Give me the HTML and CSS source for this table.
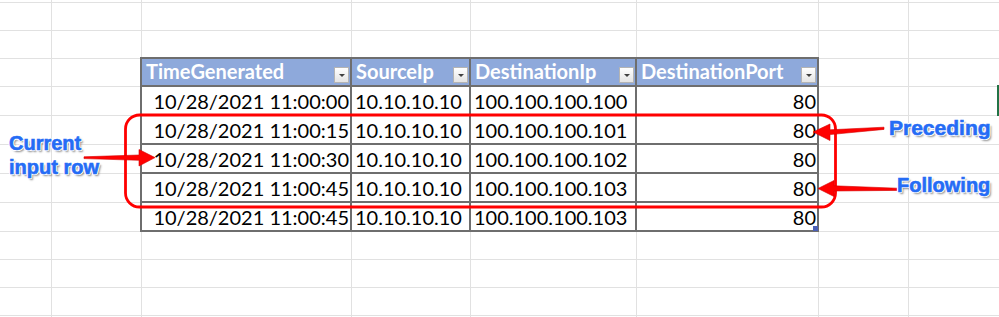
FILE: index.html
```html
<!DOCTYPE html>
<html>
<head>
<meta charset="utf-8">
<link rel="stylesheet" href="styles.css">
</head>
<body>
<div class="page">
  <div class="tbl">
    <div class="th"><span>TimeGenerated</span><i class="flt"></i></div>
    <div class="th"><span>SourceIp</span><i class="flt"></i></div>
    <div class="th"><span>DestinationIp</span><i class="flt"></i></div>
    <div class="th"><span>DestinationPort</span><i class="flt"></i></div>

    <div class="td r">10/28/2021 11:00:00</div><div class="td">10.10.10.10</div><div class="td">100.100.100.100</div><div class="td r">80</div>
    <div class="td r">10/28/2021 11:00:15</div><div class="td">10.10.10.10</div><div class="td">100.100.100.101</div><div class="td r">80</div>
    <div class="td r">10/28/2021 11:00:30</div><div class="td">10.10.10.10</div><div class="td">100.100.100.102</div><div class="td r">80</div>
    <div class="td r">10/28/2021 11:00:45</div><div class="td">10.10.10.10</div><div class="td">100.100.100.103</div><div class="td r">80</div>
    <div class="td r">10/28/2021 11:00:45</div><div class="td">10.10.10.10</div><div class="td">100.100.100.103</div><div class="td r last">80<i class="handle"></i></div>
  </div>

  <svg class="marks" width="999" height="317" viewBox="0 0 999 317">
    <rect x="125.5" y="115" width="710" height="92" rx="14" ry="14" fill="none" stroke="#f00" stroke-width="2.8"/>
    <path d="M84,156.8 L139,155 L139,149.5 L155,157.6 L139,166 L139,160.3 L84,158.6 Z" fill="#f00" stroke="#d40000" stroke-width="0.6"/>
    <path d="M813,132 L830,124 L830,129.8 L884,127.2 L884,129.4 L830,134.6 L830,140.5 Z" fill="#f00" stroke="#d40000" stroke-width="0.6"/>
    <path d="M818,188.5 L834,180.5 L834,185.8 L897,188.2 L897,190.4 L834,191 L834,196.5 Z" fill="#f00" stroke="#d40000" stroke-width="0.6"/>
  </svg>

  <div class="note note-current">Current<br>input row</div>
  <div class="note note-pre">Preceding</div>
  <div class="note note-fol">Following</div>
  <div class="sel"></div>
</div>
</body>
</html>
```
FILE: styles.css
```css
html, body {
  margin: 0;
  padding: 0;
  background: #fff;
}

.page {
  --g: linear-gradient(#e1e1e1, #e1e1e1);
  position: relative;
  width: 999px;
  height: 317px;
  overflow: hidden;
  background-color: #fff;
  background-image:
    var(--g), var(--g), var(--g), var(--g), var(--g), var(--g), var(--g),
    var(--g), var(--g), var(--g), var(--g), var(--g), var(--g),
    var(--g), var(--g), var(--g), var(--g), var(--g), var(--g);
  background-repeat: no-repeat;
  background-size:
    1px 100%, 1px 100%, 1px 100%, 1px 100%, 1px 100%, 1px 100%, 1px 100%,
    100% 1px, 100% 1px, 100% 1px, 100% 1px, 100% 1px, 100% 1px,
    100% 1px, 100% 1px, 100% 1px, 100% 1px, 100% 1px, 100% 1px;
  background-position:
    51px 0, 141px 0, 351px 0, 470px 0, 636px 0, 818px 0, 908px 0,
    0 2px, 0 30px, 0 58px, 0 86px, 0 115px, 0 144px,
    0 173px, 0 202px, 0 231px, 0 259px, 0 287px, 0 315px;
  padding-top: 57px;
  padding-left: 140px;
  box-sizing: border-box;
  font-family: Lato, "Open Sans", sans-serif;
}

.tbl {
  display: grid;
  grid-template-columns: 210px 119px 166px 182px;
  grid-template-rows: 28px repeat(5, 29px);
  width: max-content;
  border-left: 2px solid #6e6e6e;
  border-top: 2px solid #6e6e6e;
  background: #fff;
}

.th, .td {
  box-sizing: border-box;
  border-right: 2px solid #6e6e6e;
  border-bottom: 2px solid #6e6e6e;
  display: flex;
  white-space: nowrap;
}

.th {
  background: #8ea9db;
  color: #fff;
  font-weight: 700;
  font-size: 20px;
  align-items: center;
  justify-content: space-between;
  padding: 0 1px 0 4px;
}

.th span {
  margin-top: -3px;
}

.flt {
  width: 13px;
  height: 14px;
  border: 1px solid #b4b4b4;
  background: linear-gradient(#ffffff, #e4e4e4);
  display: flex;
  align-items: center;
  justify-content: center;
  margin-top: 5px;
  flex: none;
}

.flt::after {
  content: "";
  width: 0;
  height: 0;
  border-left: 3px solid transparent;
  border-right: 3px solid transparent;
  border-top: 3px solid #404040;
  margin-top: 2px;
}

.td {
  color: #000;
  font-size: 20px;
  align-items: center;
  padding: 1px 3px 0 3px;
}

.td.r {
  justify-content: flex-end;
  padding-right: 1px;
}

.last {
  position: relative;
}

.handle {
  position: absolute;
  right: -1px;
  bottom: -1px;
  width: 5px;
  height: 5px;
  background: #4b5fb5;
}

.marks {
  position: absolute;
  left: 0;
  top: 0;
}

.note {
  position: absolute;
  font-family: "Liberation Sans", Arial, sans-serif;
  font-weight: 700;
  font-size: 20px;
  line-height: 24px;
  color: #256cf5;
  -webkit-text-stroke: 0.6px #256cf5;
  text-shadow:
    -1px 0 0 #fff, 1px 0 0 #fff, 0 -1px 0 #fff, 0 1px 0 #fff,
    -1px -1px 0 #fff, 1px 1px 0 #fff, -1px 1px 0 #fff, 1px -1px 0 #fff,
    2px 2px 2px rgba(0, 0, 0, 0.45);
}

.note-current {
  left: 9px;
  top: 131px;
}

.note-pre {
  left: 889px;
  top: 116px;
  font-size: 21px;
}

.note-fol {
  left: 897px;
  top: 173px;
  font-size: 20px;
}

.sel {
  position: absolute;
  left: 997px;
  top: 85px;
  width: 2px;
  height: 31px;
  background: #217346;
}
```
